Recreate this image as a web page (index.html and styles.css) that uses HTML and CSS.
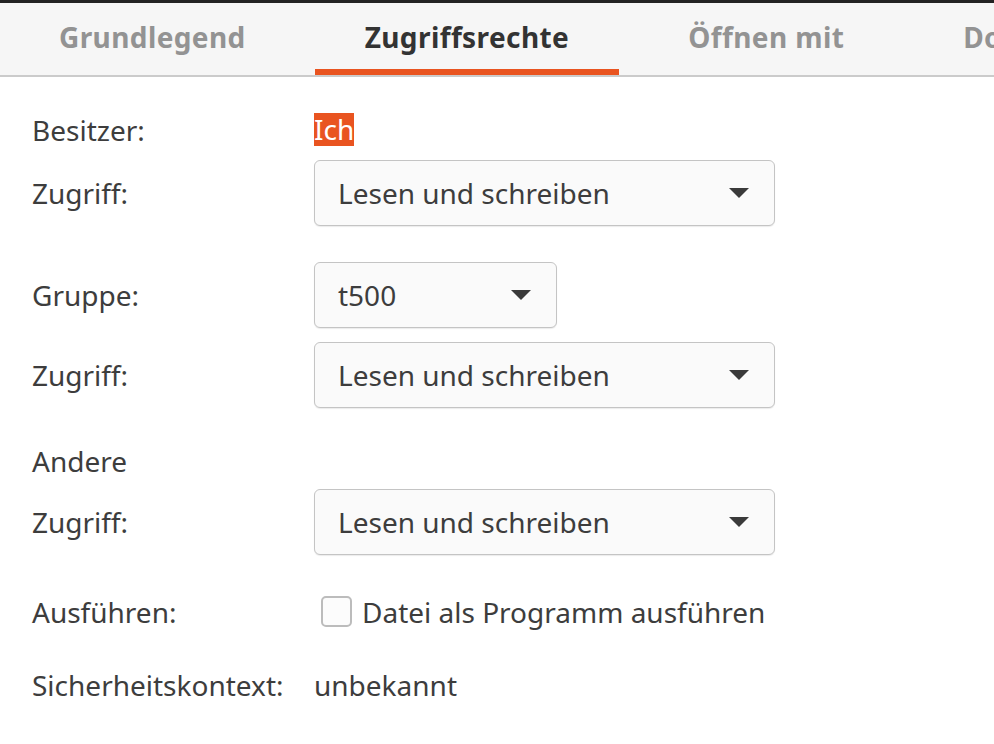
FILE: index.html
```html
<!DOCTYPE html>
<html lang="de">
<head>
  <meta charset="UTF-8" />
  <meta name="viewport" content="width=device-width, initial-scale=1.0"/>
  <title>Eigenschaften</title>
  <link rel="stylesheet" href="styles.css">
</head>
<body>
  <div class="titlebar"></div>
  <nav class="tabs">
    <div class="tab">Grundlegend</div>
    <div class="tab active">Zugriffsrechte</div>
    <div class="tab">Öffnen mit</div>
    <div class="tab">Dokument</div>
  </nav>

  <main class="perms">
    <div class="row row-text">
      <span class="label">Besitzer:</span>
      <span class="owner">Ich</span>
    </div>
    <div class="row row-combo gap-sm">
      <span class="label">Zugriff:</span>
      <div class="combo wide"><span>Lesen und schreiben</span><i class="arrow"></i></div>
    </div>

    <div class="row row-combo gap-lg">
      <span class="label">Gruppe:</span>
      <div class="combo narrow"><span>t500</span><i class="arrow"></i></div>
    </div>
    <div class="row row-combo gap-sm">
      <span class="label">Zugriff:</span>
      <div class="combo wide"><span>Lesen und schreiben</span><i class="arrow"></i></div>
    </div>

    <div class="row row-text gap-lg">
      <span class="label">Andere</span>
    </div>
    <div class="row row-combo gap-xs">
      <span class="label">Zugriff:</span>
      <div class="combo wide"><span>Lesen und schreiben</span><i class="arrow"></i></div>
    </div>

    <div class="row row-check gap-xl">
      <span class="label">Ausführen:</span>
      <label class="check"><span class="box"></span>Datei als Programm ausführen</label>
    </div>

    <div class="row row-text gap-xl">
      <span class="label">Sicherheitskontext:</span>
      <span>unbekannt</span>
    </div>
  </main>
</body>
</html>
```

FILE: styles.css
```css
body {
  margin: 0;
  background: #ffffff;
  color: #3d3d3d;
  font-family: "Noto Sans", "Open Sans", sans-serif;
  font-size: 28px;
  overflow: hidden;
}

.titlebar {
  height: 3px;
  background: #232323;
}

.tabs {
  display: flex;
  gap: 19px;
  height: 72px;
  padding-left: 9px;
  background: #f6f6f6;
  border-bottom: 2px solid #cbcbcb;
  white-space: nowrap;
  overflow: hidden;
}
.tab {
  display: flex;
  align-items: center;
  padding: 1px 50px 0;
  font-weight: bold;
  letter-spacing: 0.4px;
  color: #939393;
  border-bottom: 6px solid transparent;
}
.tab.active {
  color: #333333;
  border-bottom-color: #e95420;
}

.perms {
  padding: 36px 0 0 32px;
}
.row {
  display: flex;
  align-items: center;
}
.row-text { height: 33px; }
.row-combo { height: 66px; }
.row-check { height: 31px; }
.gap-xs { margin-top: 12px; }
.gap-sm { margin-top: 14px; }
.gap-lg { margin-top: 36px; }
.gap-xl { margin-top: 41px; }

.label {
  width: 282px;
  flex-shrink: 0;
}

.owner {
  background: #e95420;
  color: #ffffff;
  line-height: 33px;
}

.combo {
  box-sizing: border-box;
  height: 66px;
  display: flex;
  align-items: center;
  justify-content: space-between;
  padding: 0 25px 0 23px;
  background: #fafafa;
  border: 1px solid #c4c4c4;
  border-radius: 6px;
  box-shadow: 0 1px 1px rgba(0, 0, 0, 0.08);
}
.combo.wide { width: 461px; }
.combo.narrow { width: 243px; }

.arrow {
  width: 0;
  height: 0;
  border-left: 10px solid transparent;
  border-right: 10px solid transparent;
  border-top: 10px solid #3a3a3a;
}

.check {
  display: flex;
  align-items: center;
  gap: 10px;
  margin-left: 7px;
}
.box {
  box-sizing: border-box;
  width: 31px;
  height: 31px;
  border: 2px solid #bcbcbc;
  border-radius: 5px;
  background: #fcfcfc;
}
```
